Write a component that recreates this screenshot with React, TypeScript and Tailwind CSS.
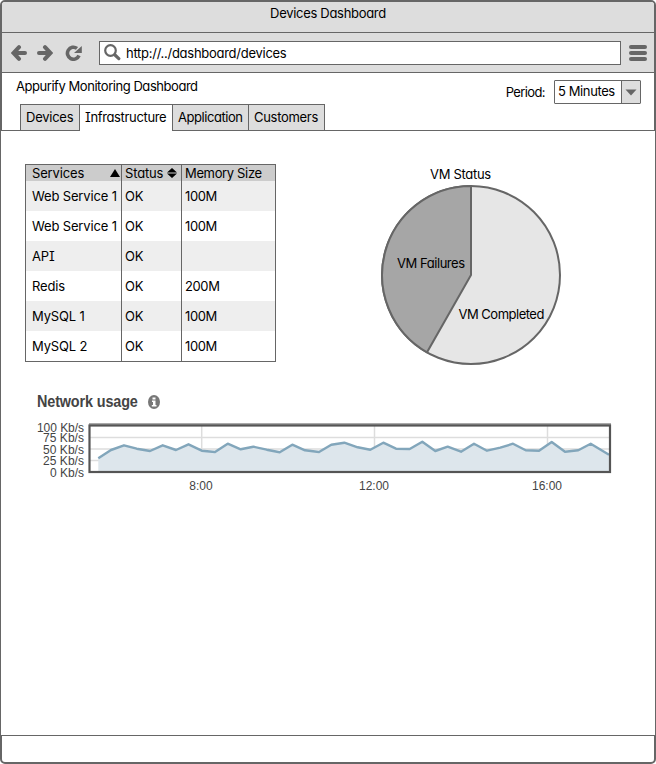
import React from "react";

type Service = { name: string; status: string; memory: string };

const services: Service[] = [
  { name: "Web Service 1", status: "OK", memory: "100M" },
  { name: "Web Service 1", status: "OK", memory: "100M" },
  { name: "API", status: "OK", memory: "" },
  { name: "Redis", status: "OK", memory: "200M" },
  { name: "MySQL 1", status: "OK", memory: "100M" },
  { name: "MySQL 2", status: "OK", memory: "100M" },
];

const usage: [number, number][] = [
  [98.3, 458.3], [111, 450], [124, 445.3], [136.7, 448.7], [150, 451], [162.7, 445.3],
  [176, 450], [188.5, 444.3], [201.7, 450.7], [215, 452], [227.7, 443.7], [240.7, 449.3],
  [253.3, 446.7], [266.7, 449.7], [279.7, 452.3], [292.3, 444.7], [305, 450.3], [319, 452],
  [331.3, 444.7], [344.3, 442.7], [357.7, 447.3], [370.3, 449.7], [383.3, 442.7], [396, 448.7],
  [409.7, 449], [422.3, 441.7], [435.3, 451], [447.7, 446.7], [461, 451.7], [474, 443.7],
  [487, 450.7], [500.3, 447.7], [513, 443.7], [525.7, 450.3], [539, 450.7], [551.7, 442],
  [565, 451.7], [578.3, 450.3], [590.7, 443.7], [609, 454.7],
];

function TitleBar() {
  return (
    <div className="flex h-[31px] items-center justify-center border-b border-[#666] pb-[9px]">
      <span>Devices Dashboard</span>
    </div>
  );
}

function Toolbar() {
  return (
    <div className="flex h-10 items-center border-b border-[#666] pl-[9px] pr-[7px]">
      <svg width="17" height="16" viewBox="0 0 17 16" fill="none" stroke="#666" strokeWidth="4">
        <path d="M8 2.200 2.500 8 8 13.800M3 8h11" strokeLinecap="round" />
      </svg>
      <svg className="ml-2" width="17" height="16" viewBox="0 0 17 16" fill="none" stroke="#666" strokeWidth="4">
        <path d="M9 2.200 14.500 8 9 13.800M14 8H3" strokeLinecap="round" />
      </svg>
      <svg className="ml-3" width="18" height="16" viewBox="0 0 18 16">
        <path d="M14 10.500A6 6 0 1 1 12 3.400" fill="none" stroke="#666" strokeWidth="3.600" />
        <path d="M16.800 1V8H9Z" fill="#666" />
      </svg>
      <div className="ml-4 flex h-[24px] w-[522px] shrink-0 items-center border border-[#666] bg-white pl-1">
        <svg width="17" height="17" viewBox="0 0 17 17" fill="none" stroke="#666">
          <circle cx="6.500" cy="6.500" r="5.300" strokeWidth="2.200" />
          <path d="m11 11 3.800 3.600" strokeWidth="3.200" strokeLinecap="round" />
        </svg>
        <span className="ml-[5px] tracking-[-0.27px]">http://../dashboard/devices</span>
      </div>
      <div className="ml-2 flex flex-col gap-[2px]">
        <i className="h-1 w-[18px] rounded-full bg-[#666]" />
        <i className="h-1 w-[18px] rounded-full bg-[#666]" />
        <i className="h-1 w-[18px] rounded-full bg-[#666]" />
      </div>
    </div>
  );
}

function Header() {
  return (
    <div className="flex h-[58px] justify-between border-b border-[#666] pl-[14px] pr-[13px]">
      <div className="flex flex-col">
        <span className="h-[31px] shrink-0 pt-[3px] tracking-[-0.45px]">Appurify Monitoring Dashboard</span>
        <div className="ml-1 flex h-[27px] shrink-0">
          <div className="w-[60px] border border-[#666] bg-[#ddd] pl-[5px] pt-[2px] tracking-[-0.25px]">Devices</div>
          <div className="w-[92px] border-t border-[#666] bg-white pl-[5px] pt-[2px] tracking-[-0.35px]">Infrastructure</div>
          <div className="w-[77px] border border-[#666] bg-[#ddd] pl-[5px] pt-[2px] tracking-[-0.45px]">Application</div>
          <div className="w-[76px] border border-l-0 border-[#666] bg-[#ddd] pl-[5px] pt-[2px]">Customers</div>
        </div>
      </div>
      <div className="flex items-start pt-[7px]">
        <span className="mr-[9px] mt-[2px] tracking-[-0.6px]">Period:</span>
        <div className="flex h-6 w-[87px] shrink-0 justify-between rounded-[1px] border border-[#666]">
          <span className="whitespace-nowrap pl-[3px] tracking-[-0.4px]">5 Minutes</span>
          <div className="flex w-[19px] items-center justify-center border-l border-[#666] bg-[#ddd]">
            <svg width="12" height="8" viewBox="0 0 12 8"><path d="M.5 1.500h11L6 7.500Z" fill="#666" /></svg>
          </div>
        </div>
      </div>
    </div>
  );
}

function ServicesTable() {
  return (
    <div className="w-[251px] border border-[#666] tracking-[-0.15px]">
      <div className="flex h-4 bg-[#ccc] leading-[17px]">
        <div className="flex w-24 items-center justify-between border-r border-[#666] pl-[6px] pr-[1px]">
          Services
          <svg width="10" height="8" viewBox="0 0 10 8"><path d="M5 0l5 8H0Z" /></svg>
        </div>
        <div className="flex w-[60px] items-center justify-between border-r border-[#666] pl-[3px] pr-[4px]">
          Status
          <svg width="10" height="10" viewBox="0 0 10 10"><path d="M5 0l5 4.500H0ZM0 5.500h10L5 10Z" /></svg>
        </div>
        <div className="pl-[3px] tracking-[-0.35px]">Memory Size</div>
      </div>
      {services.map((s, i) => (
        <div key={i} className={"flex h-[30px] leading-[30px] " + (i % 2 === 0 ? "bg-[#eee]" : "bg-white")}>
          <div className="w-24 whitespace-nowrap border-r border-[#666] pl-[6px]">{s.name}</div>
          <div className="w-[60px] border-r border-[#666] pl-[3px]">{s.status}</div>
          <div className="pl-[3px] tracking-[-0.4px]">{s.memory}</div>
        </div>
      ))}
    </div>
  );
}

function VmStatus() {
  return (
    <div className="flex w-[182px] flex-col">
      <span className="h-[20px] pl-[50px] leading-[20px]">VM Status</span>
      <svg width="182" height="182" viewBox="0 0 182 182" stroke="#666" strokeWidth="2">
        <circle cx="91" cy="91" r="89" fill="#e6e6e6" />
        <path d="M91 91V2A89 89 0 0 0 47 168.300Z" fill="#a6a6a6" />
        <g fill="#000" stroke="none">
          <text x="17" y="84" className="tracking-[-0.45px]">VM Failures</text>
          <text x="78.500" y="135" className="tracking-[-0.5px]">VM Completed</text>
        </g>
      </svg>
    </div>
  );
}

function NetworkUsage() {
  const line = usage.map(([x, y]) => `${x},${y}`).join(" ");
  return (
    <section className="ml-[29px] mt-[19px] w-[590px] tracking-normal text-[#444]">
      <div className="flex h-[33px] items-center pl-[7px]">
        <h2 className="w-[111px] origin-left scale-x-[0.9] whitespace-nowrap font-['Liberation_Sans',Arial,sans-serif] text-[16px] font-bold tracking-[-0.15px]">Network usage</h2>
        <svg width="12" height="14" viewBox="0 0 12 14">
          <ellipse cx="6" cy="7" rx="6" ry="7" fill="#777" />
          <path d="M4.500 2.500h3v2h-3zM4 5.500h3.500V10h1v1.500H3.800V10H5V7H4z" fill="#fff" />
        </svg>
      </div>
      <svg width="590" height="78" viewBox="30 418 590 78" className="font-['Liberation_Sans',Arial,sans-serif] text-[12px]">
        <rect x="90" y="425" width="520" height="47" fill="#fff" />
        <g stroke="#ddd" strokeWidth="1.500">
          <path d="M90 437.500H610M90 449H610M90 460.500H610" />
          <path d="M201.700 425V472M374.500 425V472M547.500 425V472" />
        </g>
        <polygon points={`98.300,471 ${line} 609,471`} fill="#dde6ec" />
        <polyline points={line} fill="none" stroke="#82a6bb" strokeWidth="2.400" strokeLinejoin="round" />
        <path d="M89 424H611" stroke="#aaa" strokeWidth="2" />
        <rect x="89.500" y="425.500" width="520.500" height="46.500" fill="none" stroke="#555" strokeWidth="2.200" />
        <g fill="#444" textAnchor="end">
          <text x="84" y="431.500" textLength="47">100 Kb/s</text>
          <text x="84" y="442" textLength="41">75 Kb/s</text>
          <text x="84" y="453.500" textLength="41">50 Kb/s</text>
          <text x="84" y="465" textLength="41">25 Kb/s</text>
          <text x="84" y="476.500" textLength="34">0 Kb/s</text>
        </g>
        <g fill="#444" textAnchor="middle">
          <text x="201" y="490">8:00</text>
          <text x="374" y="490">12:00</text>
          <text x="547" y="490">16:00</text>
        </g>
      </svg>
    </section>
  );
}

export default function App() {
  return (
    <div className="flex h-[764px] w-[656px] flex-col rounded-[5px] border-2 border-[#666] bg-white font-[Inter,'Noto_Sans',sans-serif] text-[13px] leading-[20px] tracking-[-0.3px] text-black [font-feature-settings:'cv11','cv08']">
      <div className="rounded-t-[3px] bg-[#ddd]">
        <TitleBar />
        <Toolbar />
      </div>
      <Header />
      <main className="-mx-px h-[605px] border-b border-[#666] bg-white">
        <div className="flex items-start pl-[24px] pt-[33px]">
          <ServicesTable />
          <div className="ml-[104px]"><VmStatus /></div>
        </div>
        <NetworkUsage />
      </main>
    </div>
  );
}
